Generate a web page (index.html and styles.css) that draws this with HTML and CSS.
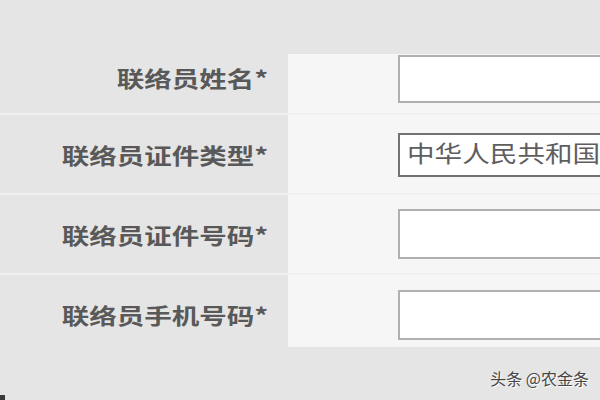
FILE: index.html
```html
<!DOCTYPE html>
<html lang="zh">
<head>
<meta charset="utf-8">
<link rel="stylesheet" href="styles.css">
</head>
<body>
<div class="form">
  <div class="row row-first">
    <div class="label"><span class="label-text">联络员姓名*</span></div>
    <div class="field"><div class="input input-first"></div></div>
  </div>
  <div class="row">
    <div class="label"><span class="label-text">联络员证件类型*</span></div>
    <div class="field"><div class="select"><span class="select-text">中华人民共和国居民身份证</span></div></div>
  </div>
  <div class="row">
    <div class="label"><span class="label-text">联络员证件号码*</span></div>
    <div class="field"><div class="input"></div></div>
  </div>
  <div class="row row-last">
    <div class="label"><span class="label-text">联络员手机号码*</span></div>
    <div class="field"><div class="input"></div></div>
  </div>
</div>
<div class="watermark">头条 @农金条</div>
<div class="corner"></div>
</body>
</html>
```

FILE: styles.css
```css
html, body {
  margin: 0;
  padding: 0;
  width: 600px;
  height: 400px;
  overflow: hidden;
  background: #e5e5e5;
  font-family: "Noto Sans CJK SC", "Noto Sans", sans-serif;
}

.form {
  margin-top: 54px;
  display: flex;
  flex-direction: column;
}

.row {
  display: flex;
  align-items: stretch;
  height: 78px;
  border-bottom: 2px solid #f0f0f0;
}

.row-first {
  height: 59px;
}

.row-last {
  height: 72px;
  border-bottom: none;
}

.label {
  width: 288px;
  box-sizing: border-box;
  padding-right: 20px;
  display: flex;
  align-items: center;
  justify-content: flex-end;
  background: #e5e5e5;
}

.row-first .label {
  padding-bottom: 14px;
}

.row-last .label {
  padding-top: 6px;
}

.label-text {
  display: inline-block;
  font-size: 22px;
  font-weight: 700;
  color: #595959;
  white-space: nowrap;
  transform: scaleX(1.25);
  transform-origin: right center;
}

.field {
  flex: 1;
  background: #f6f6f6;
  padding-left: 110px;
  display: flex;
  align-items: center;
  overflow: hidden;
}

.row-first .field {
  align-items: flex-start;
  padding-top: 1px;
}

.row-last .field {
  padding-top: 8px;
}

.input {
  width: 300px;
  flex: none;
  height: 50px;
  box-sizing: border-box;
  background: #fff;
  border: 2px solid #b0b0b0;
  border-right: none;
}

.input-first {
  height: 48px;
}

.select {
  display: block;
  width: 300px;
  flex: none;
  height: 44px;
  box-sizing: border-box;
  background: #fff;
  border: 2px solid #727272;
  border-right: none;
  padding-left: 7px;
  overflow: hidden;
  white-space: nowrap;
  line-height: 34px;
  margin-top: 1px;
}

.select-text {
  display: inline-block;
  font-size: 23px;
  color: #5e5e5e;
  transform: scaleX(1.2);
  transform-origin: 0 50%;
}

.watermark {
  position: absolute;
  right: 11px;
  bottom: 10px;
  font-size: 16px;
  color: #474747;
  text-shadow: 1px 1px 0 #fff;
  white-space: nowrap;
}

.corner {
  position: absolute;
  left: 0;
  bottom: 0;
  width: 5px;
  height: 5px;
  background: #3a3a3a;
}
```
